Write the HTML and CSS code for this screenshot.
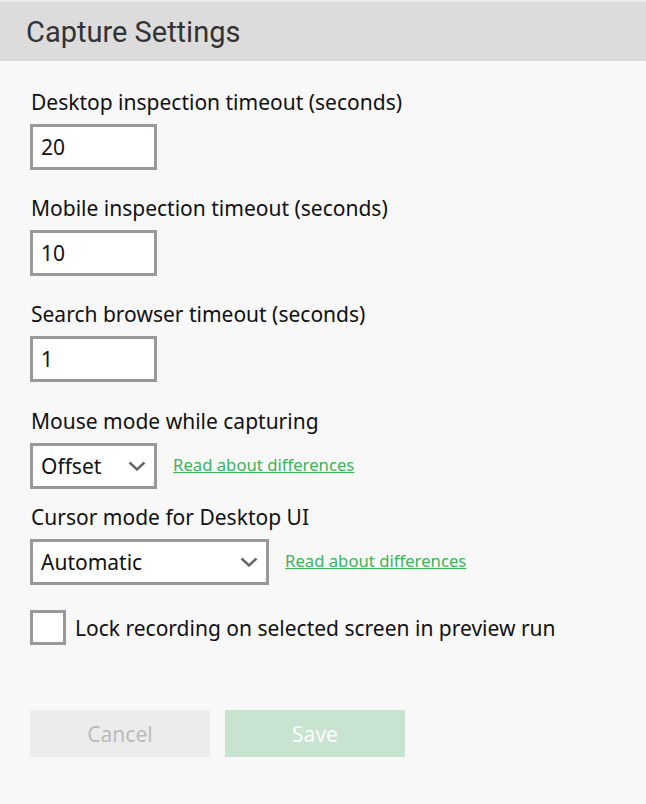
FILE: index.html
```html
<!DOCTYPE html>
<html>
<head>
<meta charset="utf-8">
<link rel="stylesheet" href="styles.css">
</head>
<body>
<div class="page">
  <header class="head"><h1 class="title">Capture Settings</h1></header>
  <main class="form">
    <div class="field">
      <label class="label">Desktop inspection timeout (seconds)</label>
      <div class="box input">20</div>
    </div>
    <div class="field">
      <label class="label">Mobile inspection timeout (seconds)</label>
      <div class="box input">10</div>
    </div>
    <div class="field third">
      <label class="label">Search browser timeout (seconds)</label>
      <div class="box input">1</div>
    </div>
    <div class="field short">
      <label class="label">Mouse mode while capturing</label>
      <div class="row">
        <div class="box select small"><span>Offset</span>
          <svg class="chev" width="18" height="10" viewBox="0 0 18 10"><path d="M1.5 1.5 L9 8.5 L16.5 1.5" fill="none" stroke="#666" stroke-width="2.4"/></svg>
        </div>
        <a class="link">Read about differences</a>
      </div>
    </div>
    <div class="field last">
      <label class="label">Cursor mode for Desktop UI</label>
      <div class="row">
        <div class="box select wide"><span>Automatic</span>
          <svg class="chev" width="18" height="10" viewBox="0 0 18 10"><path d="M1.5 1.5 L9 8.5 L16.5 1.5" fill="none" stroke="#666" stroke-width="2.4"/></svg>
        </div>
        <a class="link">Read about differences</a>
      </div>
    </div>
    <div class="check-row">
      <span class="check"></span>
      <span class="check-label">Lock recording on selected screen in preview run</span>
    </div>
    <div class="buttons">
      <button class="btn cancel">Cancel</button>
      <button class="btn save">Save</button>
    </div>
  </main>
</div>
</body>
</html>
```
FILE: styles.css
```css
html, body {
  margin: 0;
  padding: 0;
  background: #f8f8f8;
}
body {
  font-family: "Noto Sans", "Open Sans", sans-serif;
  color: #111;
}
.page {
  padding-top: 2px;
  background: #ececec;
}
.head {
  background: #dcdcdc;
  height: 59px;
  display: flex;
  align-items: center;
  padding-left: 26px;
}
.title {
  margin: 0;
  font-family: Roboto, "Liberation Sans", sans-serif;
  font-weight: 400;
  font-size: 29px;
  color: #333;
  letter-spacing: 0;
}
.form {
  background: #f8f8f8;
  padding: 27px 30px 46px 30px;
}
.field {
  display: flex;
  flex-direction: column;
  gap: 8px;
  margin-bottom: 24px;
}
.field.third { margin-bottom: 25px; }
.field.short { margin-bottom: 14px; }
.field.last { margin-bottom: 25px; }
.label {
  font-size: 21px;
  line-height: 28px;
  padding-left: 1px;
}
.box {
  box-sizing: border-box;
  border: 3px solid #999;
  background: #fff;
  height: 46px;
  font-size: 21px;
  display: flex;
  align-items: center;
  padding-left: 8px;
}
.input { width: 127px; }
.select {
  justify-content: space-between;
  padding-right: 8px;
}
.small { width: 127px; }
.wide { width: 239px; }
.row {
  display: flex;
  align-items: center;
  gap: 16px;
}
.link {
  color: #3cb35c;
  text-decoration: underline;
  font-size: 16.7px;
  margin-bottom: 3px;
}
.check-row {
  display: flex;
  align-items: center;
  gap: 9px;
}
.check {
  box-sizing: border-box;
  width: 36px;
  height: 35px;
  border: 3px solid #999;
  background: #fff;
}
.check-label { font-size: 21px; }
.buttons {
  display: flex;
  gap: 15px;
  margin-top: 65px;
}
.btn {
  width: 180px;
  height: 47px;
  border: none;
  font-family: "Noto Sans", "Open Sans", sans-serif;
  font-size: 21px;
}
.cancel { background: #ececec; color: #bbb; }
.save { background: #c8e3d0; color: #fff; }
```
